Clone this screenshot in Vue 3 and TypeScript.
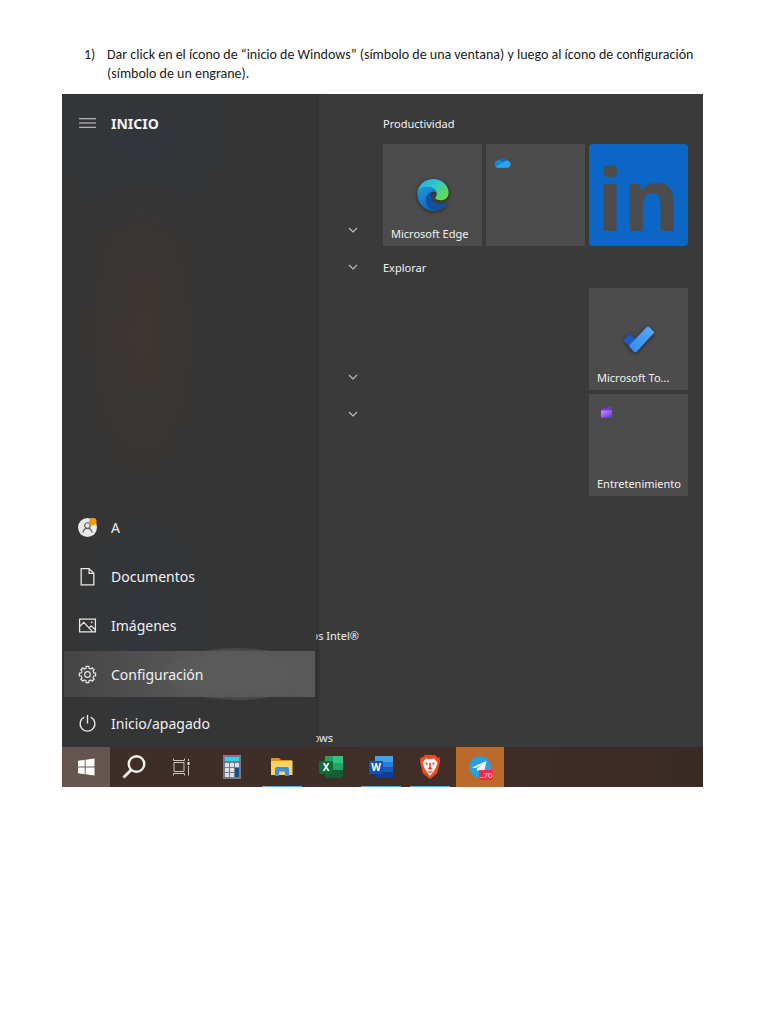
<script setup lang="ts">
interface TaskApp {
  id: string
  label: string
  open?: boolean
  alert?: boolean
}

const apps: TaskApp[] = [
  { id: 'calc', label: 'Calculadora' },
  { id: 'files', label: 'Explorador de archivos', open: true },
  { id: 'excel', label: 'Excel' },
  { id: 'word', label: 'Word', open: true },
  { id: 'brave', label: 'Brave', open: true },
  { id: 'telegram', label: 'Telegram', alert: true },
]

const places = [
  { id: 'user', label: 'A' },
  { id: 'docs', label: 'Documentos' },
  { id: 'images', label: 'Imágenes' },
  { id: 'settings', label: 'Configuración' },
  { id: 'power', label: 'Inicio/apagado' },
]

const teeth = [0, 45, 90, 135, 180, 225, 270, 315]
</script>

<template>
  <main class="page">
    <ol class="steps">
      <li>
        Dar click en el ícono de “inicio de Windows” (símbolo de una ventana) y luego al ícono de configuración
        (símbolo de un engrane).
      </li>
    </ol>

    <section class="desktop">
      <div class="start">
        <nav class="side">
          <button class="place head" type="button">
            <svg class="ico" viewBox="0 0 18 18"><path d="M1 4.5h16M1 8.5h16M1 12.5h16" stroke="#d8d8d8" fill="none" /></svg>
            <span>INICIO</span>
          </button>
          <div class="places">
            <button v-for="p in places" :key="p.id" type="button" class="place" :class="{ active: p.id === 'settings' }">
              <svg v-if="p.id === 'user'" class="ico user" viewBox="0 0 20 20">
                <circle cx="10" cy="10" r="10" fill="#e9e9e9" />
                <circle cx="10" cy="8" r="3" fill="none" stroke="#555b66" stroke-width="1.2" />
                <path d="M5.2 15.5c.3-3 2-4.6 4.8-4.6s4.5 1.6 4.8 4.6" fill="none" stroke="#555b66" stroke-width="1.2" />
                <circle cx="15.6" cy="3.8" r="4" fill="#ff9800" />
              </svg>
              <svg v-else-if="p.id === 'docs'" class="ico" viewBox="0 0 18 18">
                <path d="M3 1.5h7.500l4.500 4.500v11H3zM10.500 1.500v4.500H15" fill="none" stroke="#e8e8e8" stroke-width="1.2" />
              </svg>
              <svg v-else-if="p.id === 'images'" class="ico" viewBox="0 0 18 18">
                <path d="M1.500 3h15v12h-15zM1.500 10l4-4 8.500 9M10.500 11.300l2-2 4 4" fill="none" stroke="#e8e8e8" stroke-width="1.2" />
                <circle cx="13" cy="6" r=".9" fill="#e8e8e8" />
              </svg>
              <svg v-else-if="p.id === 'settings'" class="ico" viewBox="0 0 18 18">
                <g fill="none" stroke="#e8e8e8" stroke-width="1.1">
                  <path
                    v-for="t in teeth"
                    :key="t"
                    :transform="`rotate(${t} 9 9)`"
                    d="M6.700 3.450L7.600 3.100L7.700 1.300H10.300L10.400 3.100L11.300 3.450"
                  />
                  <circle cx="9" cy="9" r="2.7" />
                </g>
              </svg>
              <svg v-else class="ico" viewBox="0 0 18 18">
                <path d="M6 2.900a7 7 0 1 0 6 0M9 1v8" fill="none" stroke="#e8e8e8" stroke-width="1.3" />
              </svg>
              <span>{{ p.label }}</span>
            </button>
          </div>
        </nav>

        <div class="list">
          <div class="pair">
            <button v-for="n in 2" :key="n" type="button" class="chev" aria-label="Expandir">
              <svg viewBox="0 0 10 6"><path d="M1 1l4 4 4-4" fill="none" stroke="#c0c0c0" stroke-width="1.1" /></svg>
            </button>
          </div>
          <div class="pair low">
            <button v-for="n in 2" :key="n" type="button" class="chev" aria-label="Expandir">
              <svg viewBox="0 0 10 6"><path d="M1 1l4 4 4-4" fill="none" stroke="#c0c0c0" stroke-width="1.1" /></svg>
            </button>
          </div>
          <p class="cut intel"><span>os Intel®</span></p>
          <p class="cut"><span>ows</span></p>
        </div>

        <div class="tiles">
          <h2>Productividad</h2>
          <div class="grid">
            <button type="button" class="tile">
              <svg class="big" viewBox="0 0 36 36">
                <defs>
                  <linearGradient id="eTop" x1="0" y1="0" x2="1" y2=".7">
                    <stop offset="0" stop-color="#2aa9e6" /><stop offset=".5" stop-color="#2fc6cf" /><stop offset="1" stop-color="#68dc43" />
                  </linearGradient>
                  <linearGradient id="eLeft" x1="0" y1="0" x2=".5" y2="1">
                    <stop offset="0" stop-color="#2399df" /><stop offset="1" stop-color="#0d66bd" />
                  </linearGradient>
                </defs>
                <path d="M1.500 15C3 6.500 10 1 18.500 1C28 1 34.500 8 34.500 15.500C34.500 20.500 31 23.500 26 23.500C22.500 23.500 20.500 22.500 20.500 21.300C20.500 20.300 22 19.500 22 17C22 12.500 17.500 9.500 12.500 9.500C7 9.500 3 12 1.500 15Z" fill="url(#eTop)" />
                <path d="M1.500 15C3 11.500 7 9.200 12 9.200C17.500 9.200 22 12.500 22 17C22 15 19.500 14 17.500 14.500C13.500 15.500 11.500 19 12 23C12.700 28.500 17 33.500 23 34.500C11 37 .5 28 1.500 15Z" fill="url(#eLeft)" />
                <path d="M17.500 14.500C13 15.500 9.500 20 10.500 25.500C11.500 31 17 35 22.500 34.500C27 33.500 30.500 31 32.500 27.500C33 26.700 32.500 26.300 31.700 26.700C25.500 29.500 17 26.500 16.200 20C15.900 17.500 16.500 15.500 17.500 14.500Z" fill="#10509d" />
              </svg>
              <span class="cap">Microsoft Edge</span>
            </button>
            <button type="button" class="tile" aria-label="OneDrive">
              <svg class="mini" viewBox="0 0 18 12">
                <path d="M5 5A5 5 0 0 1 14 4.500L10 8L2 9A3.500 3.500 0 0 1 5 4Z" fill="#1269b8" />
                <path d="M4 4.200C6 3.500 9 5 16 10L9 12H4A4 4 0 0 1 4 4.200Z" fill="#1787d8" />
                <path d="M2 11L11 5.500C12 4.300 14 4.200 15 5A3.600 3.600 0 0 1 15 12H4C3 12 2.300 11.500 2 11Z" fill="#2aa4ef" />
              </svg>
            </button>
            <button type="button" class="tile linkedin" aria-label="LinkedIn">
              <svg viewBox="0 0 99 102"><text x="8" y="87">in</text></svg>
            </button>
          </div>
          <h2 class="second">Explorar</h2>
          <div class="grid">
            <button type="button" class="tile last">
              <svg class="big" viewBox="0 0 36 36">
                <defs>
                  <linearGradient id="todo" x1="1" y1="0" x2="0" y2="1">
                    <stop offset="0" stop-color="#58aafb" /><stop offset="1" stop-color="#3288ee" />
                  </linearGradient>
                </defs>
                <path d="M2.500 18L7 13.200Q8 12.500 9 13.200L18 22L12 31L2.500 20.500Q1.700 19 2.500 18Z" fill="#1d59c0" />
                <path d="M8.300 24L26.500 5Q27.500 4.300 28.500 5L33.500 10Q34.200 11 33.500 12L15.500 31.500Q14 32.500 12.500 31.500L8.300 26.500Q7.600 25 8.300 24Z" fill="url(#todo)" />
              </svg>
              <span class="cap">Microsoft To...</span>
            </button>
            <button type="button" class="tile last">
              <svg class="film" viewBox="0 0 12 12">
                <defs>
                  <linearGradient id="film" x1="0" y1="0" x2="1" y2="1">
                    <stop offset="0" stop-color="#d58bf5" /><stop offset="1" stop-color="#5b35dc" />
                  </linearGradient>
                </defs>
                <path d="M1 3L11 .5V3.500H12V11.500H1Z" fill="#7837d0" />
                <path d="M1 4.500H12V11.500H1Z" fill="url(#film)" />
              </svg>
              <span class="cap">Entretenimiento</span>
            </button>
          </div>
        </div>
      </div>

      <footer class="taskbar">
        <button type="button" class="task home" aria-label="Inicio">
          <svg viewBox="0 0 26 26"><path d="M5 6.800L11.700 5.800V12.500H5zM12.600 5.700L21.500 4.500V12.500H12.600zM5 13.400H11.700V20.200L5 19.200zM12.600 13.400H21.500V21.500L12.600 20.300z" fill="#fff" /></svg>
        </button>
        <button type="button" class="task" aria-label="Buscar">
          <svg viewBox="0 0 26 26"><circle cx="15.500" cy="10" r="7.8" fill="none" stroke="#f4f1ef" stroke-width="2.4" /><path d="M10 16L2.500 23.500" stroke="#f4f1ef" stroke-width="2.8" /></svg>
        </button>
        <button type="button" class="task" aria-label="Vista de tareas">
          <svg viewBox="0 0 26 26"><path d="M5 8.500h10v9H5zM4.500 4.500v2h11v-2M4.500 21.500v-2h11v2M19.500 5v2M19.500 12v9.500" fill="none" stroke="#c9c3bf" /><path d="M18.500 8h2v3h-2z" fill="#eee" /></svg>
        </button>
        <div class="apps">
          <button v-for="a in apps" :key="a.id" type="button" class="task" :class="{ open: a.open, alert: a.alert }" :aria-label="a.label">
            <svg v-if="a.id === 'calc'" viewBox="0 0 26 26">
              <path d="M4 1h18v24H4z" fill="#737b84" />
              <path d="M6 3h14v4H6z" fill="#35cfee" />
              <path d="M6 9h4v4H6zM11 9h4v4h-4zM16 9h4v4h-4zM6 14h4v4H6zM11 14h4v4h-4zM6 19h4v4H6zM11 19h4v4h-4z" fill="#d9e0e8" />
              <path d="M16 14h4v9h-4z" fill="#164f91" />
            </svg>
            <svg v-else-if="a.id === 'files'" viewBox="0 0 26 26">
              <path d="M2 4h8l2 2h11v5H2z" fill="#d99612" />
              <path d="M2 7h21.500v14H2z" fill="#fbd262" />
              <path d="M6 22v-7q0-2 2-2h10q2 0 2 2v7h-4v-4.500h-6V22z" fill="#3d8edb" />
            </svg>
            <svg v-else-if="a.id === 'excel'" viewBox="0 0 26 26">
              <path d="M7 2h8v7H7z" fill="#21a366" /><path d="M15 2h10v7H15z" fill="#33c481" />
              <path d="M7 9h8v8H7z" fill="#107c41" /><path d="M15 9h10v7H15z" fill="#21a366" />
              <path d="M7 16h18v8H7z" fill="#185c37" />
              <rect x="1" y="7" width="14" height="13" rx="1" fill="#0f6b3a" />
              <text x="8" y="17" class="letter">X</text>
            </svg>
            <svg v-else-if="a.id === 'word'" viewBox="0 0 26 26">
              <path d="M7 2h18v6H7z" fill="#41a5ee" /><path d="M7 8h18v5H7z" fill="#2b7cd3" />
              <path d="M7 13h18v5H7z" fill="#185abd" /><path d="M7 18h18v6H7z" fill="#103f91" />
              <rect x="1" y="7" width="14" height="13" rx="1" fill="#1650ae" />
              <text x="8" y="17" class="letter">W</text>
            </svg>
            <svg v-else-if="a.id === 'brave'" viewBox="0 0 26 26">
              <path d="M8 1h10l2.500 2.500L22.500 3.500L23 7.500L20.500 18Q20 19.500 18.500 20.500L13 25L7.500 20.500Q6 19.500 5.500 18L3 7.500L3.500 3.500L5.500 3.500Z" fill="#f44823" />
              <path d="M9 4.500l4 .8 4-.8L20.500 8.500L19 13L17.500 16L13 22L8.500 16L7 13L5.500 8.500Z" fill="#fff" />
              <path d="M8 8l3 1.200-1.500 2zM18 8l-3 1.200 1.500 2zM12 9h2l-.3 4 1.800 1.500-2.500 1.500-2.500-1.500 1.800-1.500zM10 16.500l3 1.200 3-1.200-3 3z" fill="#f44823" />
            </svg>
            <svg v-else viewBox="0 0 26 26">
              <circle cx="13" cy="13" r="11" fill="#2b9fd9" />
              <path d="M5 13.500L19.500 7L17 18.500L12.500 15.500L10.500 17.500L10 14.500L16 9.500L9 14Z" fill="#fff" />
              <rect x="12" y="16" width="14" height="10" rx="2" fill="#ee2d3c" />
              <text x="19" y="24" class="count">..70</text>
            </svg>
          </button>
        </div>
      </footer>
    </section>
  </main>
</template>

<style>
body {
  margin: 0;
  background: #fff;
}
</style>

<style scoped>
.page {
  padding: 45px 65px 0 62px;
  font-family: 'Noto Sans', 'Open Sans', sans-serif;
}
.steps {
  margin: 0 0 11px;
  padding: 0 0 0 45px;
  font-family: Carlito, Lato, sans-serif;
  font-size: 14px;
  line-height: 19px;
  color: #1a1a1a;
  list-style: none;
  counter-reset: step;
}
.steps li {
  display: flex;
  counter-increment: step;
}
.steps li::before {
  content: counter(step) ')';
  flex: 0 0 23px;
  margin-left: -23px;
}
button {
  margin: 0;
  padding: 0;
  border: 0;
  background: none;
  color: #f1f1f1;
  font: inherit;
  text-align: left;
}
svg {
  display: block;
}
.desktop {
  background: #3a3a3a;
  color: #f1f1f1;
}
.start {
  display: flex;
}
.side {
  flex: 0 0 254px;
  box-sizing: border-box;
  display: flex;
  flex-direction: column;
  justify-content: space-between;
  padding: 6px 1px 1px 2px;
  background:
    radial-gradient(ellipse 70px 170px at 80px 240px, rgba(75, 56, 42, 0.4), transparent),
    radial-gradient(ellipse 90px 130px at 80px 530px, rgba(45, 55, 68, 0.4), transparent),
    radial-gradient(ellipse 110px 110px at 80px 40px, rgba(45, 55, 68, 0.4), transparent),
    #353535;
  box-shadow: 1px 0 5px rgba(0, 0, 0, 0.3);
  clip-path: inset(0 -8px 0 0);
}
.places {
  display: flex;
  flex-direction: column;
  gap: 3px;
}
.place {
  position: relative;
  display: flex;
  align-items: center;
  gap: 14px;
  width: 100%;
  height: 46px;
  padding-left: 14px;
  font-size: 14px;
}
.head {
  font-weight: 700;
}
.ico {
  flex: none;
  width: 19px;
  height: 19px;
}
.active {
  background: linear-gradient(90deg, #454545, #575757 50%, #595959);
}
.active::before {
  content: '';
  position: absolute;
  inset: -3px 5px -3px 100px;
  border-radius: 50%;
  background: radial-gradient(closest-side, #5c5c5c 50%, rgba(88, 88, 88, 0.5));
}
.active .ico,
.active span {
  position: relative;
}
.list {
  flex: 0 0 67px;
  padding-top: 117px;
}
.pair.low {
  margin-top: 73px;
}
.chev {
  display: flex;
  align-items: center;
  width: 100%;
  height: 37px;
  padding-left: 32px;
}
.chev svg {
  width: 10px;
  height: 6px;
}
.cut {
  display: flex;
  justify-content: flex-end;
  width: 43px;
  margin: 0;
  overflow: hidden;
  font-size: 11px;
  line-height: 18px;
  white-space: nowrap;
}
.cut:last-child {
  width: 17px;
}
.intel {
  margin: 195px 0 84px;
}
.tiles {
  flex: 1;
  padding: 20px 15px 0 0;
}
h2 {
  margin: 0;
  font-size: 11px;
  line-height: 20px;
  font-weight: 400;
}
.second {
  margin-top: 12px;
}
.grid {
  display: grid;
  grid-template-columns: repeat(3, 1fr);
  gap: 4px;
  margin-top: 10px;
}
.tile {
  display: flex;
  flex-direction: column;
  justify-content: space-between;
  box-sizing: border-box;
  height: 102px;
  padding: 12px 0 3px 8px;
  background: #4c4c4c;
}
.last {
  grid-column: 3;
}
.big {
  align-self: center;
  width: 34px;
  height: 34px;
  margin: 22px 8px 0 0;
  filter: drop-shadow(0 1px 2px rgba(0, 0, 0, 0.5));
}
.mini {
  width: 17px;
  height: 12px;
}
.film {
  width: 12px;
  height: 12px;
  margin-left: 3px;
}
.cap {
  font-size: 11px;
  line-height: 18px;
  white-space: nowrap;
}
.linkedin {
  padding: 0;
  border-radius: 4px;
  background: #0b66c6;
}
.linkedin svg {
  width: 100%;
  height: 100%;
  overflow: visible;
}
.linkedin text {
  font: 700 86px 'Open Sans', sans-serif;
  fill: #4c4c4c;
}
.taskbar {
  display: flex;
  height: 40px;
  background: linear-gradient(90deg, #3d2e27, #402e27 60%, #3a2a25);
}
.task {
  display: flex;
  flex: 0 0 48px;
  align-items: center;
  justify-content: center;
  box-sizing: border-box;
  height: 40px;
}
.task svg {
  width: 26px;
  height: 26px;
}
.home {
  background: #64554f;
}
.apps {
  display: flex;
  flex: 0 0 296px;
  justify-content: space-between;
  margin-left: 2px;
}
.open {
  background: linear-gradient(#5aa9ea, #5aa9ea) center bottom / 40px 1px no-repeat;
}
.alert {
  background: #bb6a2c;
}
.letter {
  font: 700 10px 'Open Sans', sans-serif;
  fill: #fff;
  text-anchor: middle;
}
.count {
  font: 8px 'Open Sans', sans-serif;
  fill: #fff;
  text-anchor: middle;
}
</style>
